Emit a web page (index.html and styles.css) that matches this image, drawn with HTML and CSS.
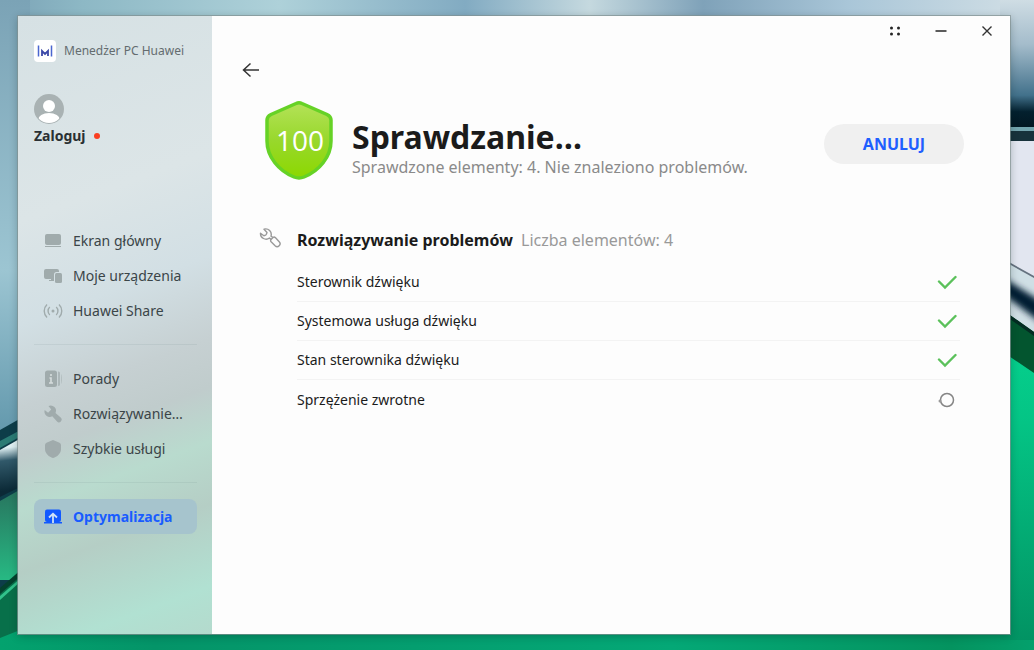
FILE: index.html
```html
<!DOCTYPE html>
<html lang="pl">
<head>
<meta charset="utf-8">
<title>Menedżer PC Huawei</title>
<link rel="stylesheet" href="styles.css">
</head>
<body>
<svg class="wallpaper" viewBox="0 0 1034 650" preserveAspectRatio="none" aria-hidden="true">
  <defs>
    <linearGradient id="top" x1="0" x2="1" y1="0" y2="0"><stop offset="0" stop-color="#7ba3b6"/><stop offset=".08" stop-color="#8db8c5"/><stop offset=".27" stop-color="#aed1d9"/><stop offset=".45" stop-color="#82abc2"/><stop offset=".57" stop-color="#c5d9df"/><stop offset=".68" stop-color="#7fa2b9"/><stop offset=".82" stop-color="#a9c6d8"/><stop offset="1" stop-color="#d3e0e6"/></linearGradient>
    <linearGradient id="left" x1="0" x2="0" y1="0" y2="1"><stop offset="0" stop-color="#7ba3b6"/><stop offset=".6" stop-color="#9cc5d2"/><stop offset="1" stop-color="#5d94a9"/></linearGradient>
    <linearGradient id="rightTop" x1="0" x2="0" y1="0" y2="1"><stop offset="0" stop-color="#cfdde4"/><stop offset=".35" stop-color="#a4bccb"/><stop offset=".75" stop-color="#42718b"/><stop offset=".88" stop-color="#03202e"/><stop offset="1" stop-color="#021722"/></linearGradient>
    <linearGradient id="rightGreen" x1="0" x2="0" y1="0" y2="1"><stop offset="0" stop-color="#05cf8c"/><stop offset=".25" stop-color="#04c485"/><stop offset="1" stop-color="#029363"/></linearGradient>
    <linearGradient id="leftGreen" x1="0" x2="0" y1="0" y2="1"><stop offset="0" stop-color="#28705c"/><stop offset="1" stop-color="#27b983"/></linearGradient>
    <linearGradient id="tube" gradientUnits="userSpaceOnUse" x1="8" y1="440" x2="14" y2="490"><stop offset="0" stop-color="#eef9fa"/><stop offset=".15" stop-color="#dceef1"/><stop offset=".4" stop-color="#31596a"/><stop offset="1" stop-color="#0b2936"/></linearGradient>
    <linearGradient id="bottom" x1="0" x2="1" y1="0" y2="0"><stop offset="0" stop-color="#03a26e"/><stop offset=".15" stop-color="#049468"/><stop offset=".65" stop-color="#04a876"/><stop offset=".92" stop-color="#04935f"/><stop offset="1" stop-color="#04a06c"/></linearGradient>
    <filter id="soft" x="-50%" y="-50%" width="200%" height="200%"><feGaussianBlur stdDeviation="3"/></filter>
  </defs>
  <rect width="1034" height="650" fill="url(#top)"/>
  <rect width="30" height="450" fill="url(#left)"/>
  <path d="M0 430 30 413V650H0Z" fill="#0d3d49"/>
  <path d="M0 441 30 425V431L0 448Z" fill="#2a7b74"/>
  <path d="M0 450 30 433V482L0 497Z" fill="url(#tube)"/>
  <path d="M0 501 30 484V580H0Z" fill="url(#leftGreen)"/>
  <path d="M0 591 30 566V640H0Z" fill="#08704a"/>
  <path d="M0 588 30 562V568L0 594Z" fill="#04412d"/>
  <path d="M0 596 30 570V573L0 600Z" fill="#32c28b"/>
  <path d="M0 638 20 630H1034V650H0Z" fill="url(#bottom)"/>
  <rect x="1000" width="34" height="127" fill="url(#rightTop)"/>
  <rect x="1000" y="127" width="34" height="4" fill="#73a5ae"/>
  <rect x="1000" y="131" width="34" height="10" fill="#17323b"/>
  <rect x="1000" y="141" width="34" height="210" fill="#e2e6f0"/>
  <path d="M1000 258 1034 276V340L1000 312Z" fill="#cfdfe5"/>
  <path d="M1000 257 1034 276V278L1000 259Z" fill="#65727f"/>
  <path d="M1000 276 1044 303V325L1000 292Z" fill="#061c33" filter="url(#soft)"/>
  <path d="M1000 308 1034 332V390H1000Z" fill="#03552f"/>
  <path d="M1000 308 1034 332V336L1000 312Z" fill="#032c22"/>
  <path d="M1000 350 1034 373V640H1000Z" fill="url(#rightGreen)"/>
</svg>
<div class="window">
  <aside class="sidebar">
    <div class="brand">
      <svg class="brand-logo" viewBox="0 0 22 22" aria-hidden="true"><rect width="22" height="22" rx="4" fill="#fff"/><path d="M4.500 5.500v11M17.500 5.500v11" stroke="#4a66d0" stroke-width="1.500"/><path d="M8 16v-5l3 3 3-3v5" fill="none" stroke="#3b49a8" stroke-width="1.800"/></svg>
      <span>Menedżer PC Huawei</span>
    </div>
    <button class="account" type="button">
      <svg class="avatar" viewBox="0 0 30 30" aria-hidden="true"><defs><clipPath id="face"><circle cx="15" cy="15" r="14"/></clipPath></defs><circle cx="15" cy="15" r="15" fill="#a9b2b3"/><g clip-path="url(#face)" fill="#fff"><circle cx="15" cy="12" r="6"/><ellipse cx="15" cy="26" rx="11" ry="7"/></g></svg>
      <span class="account-name">Zaloguj<i class="dot"></i></span>
    </button>
    <nav class="menu">
      <a href="#" class="item"><svg viewBox="0 0 20 20"><rect x="2" y="3" width="16" height="11" rx="2"/><path d="M2 15h16v1H2z"/></svg>Ekran główny</a>
      <a href="#" class="item"><svg viewBox="0 0 20 20"><path d="M3 3h11a2 2 0 0 1 2 2v1h-2.500A2.500 2.500 0 0 0 11 8.500V15H6v-1h2v-1H3a2 2 0 0 1-2-2V5a2 2 0 0 1 2-2z"/><rect x="12" y="7" width="7" height="10" rx="1.500"/></svg>Moje urządzenia</a>
      <a href="#" class="item"><svg viewBox="0 0 20 20"><circle cx="10" cy="10" r="1.500"/><path d="M6.800 6a5.500 5.500 0 0 0 0 8M13.200 6a5.500 5.500 0 0 1 0 8M4 3.500a9 9 0 0 0 0 13M16 3.500a9 9 0 0 1 0 13" class="line"/></svg>Huawei Share</a>
      <hr>
      <a href="#" class="item"><svg viewBox="0 0 20 20"><rect x="2" y="1.500" width="12" height="16.500" rx="2.500"/><path d="M15 2.500c2 0 2 1 2 2v10.500c0 1 0 2-2 2z" opacity=".7"/><path d="M18 5c1.300 1 1.300 9 0 10z" opacity=".5"/><path d="M8 5v2M6.500 9H8v5M6 14h4" fill="none" stroke="#d5dddd" stroke-width="1.600"/></svg>Porady</a>
      <a href="#" class="item"><svg viewBox="0 0 20 20"><path d="M5.500 2A5.300 5.300 0 0 1 12.500 9l5.200 4.600a2.600 2.600 0 0 1-3.700 4L9.300 12.200A5.300 5.300 0 0 1 1.700 6l3.400 2.800L8.200 5.500z"/></svg>Rozwiązywanie…</a>
      <a href="#" class="item"><svg viewBox="0 0 20 20"><path d="M10 1 16.500 3.800Q18 4.500 18 6v4c0 4.500-4 8-8 9-4-1-8-4.500-8-9V6Q2 4.500 3.500 3.800z"/></svg>Szybkie usługi</a>
      <hr>
      <a href="#" class="item active" aria-current="page"><svg viewBox="0 0 20 20"><rect x="2" y="2.500" width="16" height="12.500" rx="2"/><path d="M1 15h18v1.500H1z"/><path d="M10 16V7M6 10.500 10 6.800l4 3.700" fill="none" stroke="#cfe1f5" stroke-width="1.800"/></svg>Optymalizacja</a>
    </nav>
  </aside>
  <main class="content">
    <div class="titlebar">
      <button type="button" aria-label="Menu"><svg viewBox="0 0 16 16"><g fill="#252525"><circle cx="4.500" cy="5" r="1.500"/><circle cx="11.500" cy="5" r="1.500"/><circle cx="4.500" cy="11" r="1.500"/><circle cx="11.500" cy="11" r="1.500"/></g></svg></button>
      <button type="button" aria-label="Minimalizuj"><svg viewBox="0 0 16 16"><path d="M2.500 8h11" stroke="#252525" stroke-width="1.500"/></svg></button>
      <button type="button" aria-label="Zamknij"><svg viewBox="0 0 16 16"><path d="m3.500 3.500 9 9m0-9-9 9" stroke="#333" stroke-width="1.400"/></svg></button>
    </div>
    <button class="back" type="button" aria-label="Wstecz"><svg viewBox="0 0 18 16"><path d="M17 8H1.500M8.500 1.500 1.500 8l7 6.500" fill="none" stroke="#333" stroke-width="1.500"/></svg></button>
    <header class="status">
      <svg class="shield" viewBox="0 0 68 80" role="img" aria-label="100"><defs><linearGradient id="sh" x1="0" y1="0" x2="0" y2="1"><stop offset="0" stop-color="#b4e258"/><stop offset=".5" stop-color="#98d82c"/><stop offset="1" stop-color="#8cd800"/></linearGradient></defs><path d="M31 3.500Q34 2 37 3.500L62 14.500Q66 16.500 66 20V41C66 57 54 71 39 77Q34 79 29 77C14 71 2 57 2 41V20Q2 16.500 6 14.500Z" fill="url(#sh)" stroke="#66d226" stroke-width="3.500"/><text x="35" y="51" text-anchor="middle" class="score">100</text></svg>
      <div class="status-text">
        <h1>Sprawdzanie…</h1>
        <p>Sprawdzone elementy: 4. Nie znaleziono problemów.</p>
      </div>
      <button class="cancel" type="button">ANULUJ</button>
    </header>
    <section class="checks">
      <svg class="tool" viewBox="0 0 24 24" aria-hidden="true"><path d="M6 3.200A5.600 5.600 0 0 1 13 10.200l2 1.300c.8-.6 1.600-.5 2.300.1l3.900 4.100a2.900 2.900 0 0 1-4.100 4.100l-4-4c-.6-.7-.6-1.500-.1-2.200L11.500 12A5.600 5.600 0 0 1 2.500 7.200l3.400 2.600Q8.500 9.500 9 6.500z" fill="none" stroke="#999" stroke-width="1.400" stroke-linejoin="round"/><path d="m13 13.600 2-2.100" stroke="#999" stroke-width="1.400"/></svg>
      <h2>Rozwiązywanie problemów <span>Liczba elementów: 4</span></h2>
      <ul>
        <li>Sterownik dźwięku<svg viewBox="0 0 20 20"><path d="m2 9.500 6 6L18.500 5" class="tick"/></svg></li>
        <li>Systemowa usługa dźwięku<svg viewBox="0 0 20 20"><path d="m2 9.500 6 6L18.500 5" class="tick"/></svg></li>
        <li>Stan sterownika dźwięku<svg viewBox="0 0 20 20"><path d="m2 9.500 6 6L18.500 5" class="tick"/></svg></li>
        <li>Sprzężenie zwrotne<svg viewBox="0 0 20 20"><circle cx="10" cy="10" r="6.500" fill="none" stroke="#858585" stroke-width="1.500"/><circle cx="3" cy="11" r="1.500" fill="#999"/></svg></li>
      </ul>
    </section>
  </main>
</div>
</body>
</html>
```
FILE: styles.css
```css
* { box-sizing: border-box; }
body {
  margin: 0;
  min-height: 100vh;
  display: flex;
  padding: 16px 24px 16px 18px;
  font-family: "Noto Sans", "Open Sans", sans-serif;
  font-size: 14px;
  line-height: 20px;
  color: #1b1b1b;
}
button { border: 0; padding: 0; background: none; font: inherit; color: inherit; }
svg { display: block; flex: none; }
h1, h2, p, ul { margin: 0; padding: 0; }
.wallpaper { position: fixed; inset: 0; width: 100%; height: 100%; z-index: -1; }
.window {
  flex: 1;
  display: flex;
  box-shadow: 0 0 0 1px rgba(130, 145, 145, .7), 0 2px 8px rgba(0, 30, 30, .3);
}
.sidebar {
  width: 194px;
  flex: none;
  padding: 24px 15px 24px 16px;
  background: linear-gradient(160deg, #d6e1e4 0%, #dce5e7 30%, #d2dfe4 45%, #c6d0d2 57%, #c0cccc 64%, #b9dbce 72%, #b5cec5 81%, #b1e1d2 93%, #b4dacd 100%);
}
.brand { display: flex; align-items: center; gap: 8px; font-size: 12px; line-height: 22px; color: #646c6f; }
.brand-logo { width: 22px; height: 22px; }
.account { display: block; margin-top: 32px; text-align: left; }
.avatar { width: 30px; height: 30px; }
.account-name { display: flex; align-items: center; gap: 8px; margin-top: 2px; font-weight: 700; font-size: 14px; color: #2a3033; }
.dot { width: 6px; height: 6px; border-radius: 50%; background: #fa3f22; }
.menu { margin-top: 77px; }
.item {
  display: flex;
  align-items: center;
  gap: 10px;
  height: 35px;
  padding-left: 9px;
  border-radius: 8px;
  color: #3b4548;
  text-decoration: none;
  white-space: nowrap;
}
.item svg { width: 20px; height: 20px; fill: #a0abac; }
.item .line { fill: none; stroke: #a0abac; stroke-width: 1.4; }
.item.active { background: #a6c4cd; color: #195cff; font-weight: 700; }
.item.active svg { fill: #1259ff; }
.menu hr { height: 1px; margin: 16px 0; border: 0; background: rgba(90, 120, 120, .1); }
.content { flex: 1; min-width: 0; background: #fdfdfd; }
.titlebar { display: flex; justify-content: flex-end; gap: 30px; height: 30px; padding-right: 15px; }
.titlebar svg { width: 16px; height: 16px; }
.back { display: block; margin: 16px 0 0 30px; }
.back svg { width: 18px; height: 16px; }
.status { display: flex; align-items: center; margin: 22px 46px 0 53px; }
.shield { width: 68px; height: 80px; }
.score { font-family: "Open Sans", sans-serif; font-size: 28px; fill: #fff; }
.status-text { flex: 1; margin-left: 19px; padding-top: 14px; }
h1 { font-size: 32px; line-height: 40px; }
.status-text p { font-size: 16px; line-height: 20px; color: #8a8a8a; }
.cancel { width: 140px; height: 40px; margin-top: 8px; border-radius: 20px; background: #f0f0f0; color: #1f5fff; font-size: 16px; font-weight: 700; }
.checks { display: grid; grid-template-columns: 24px 1fr; column-gap: 15px; margin: 46px 50px 0 46px; }
.tool { width: 24px; height: 24px; }
h2 { font-size: 16px; line-height: 28px; }
h2 span { margin-left: 4px; font-weight: 400; color: #999; }
.checks ul { grid-column: 2; margin-top: 9px; list-style: none; }
.checks li { display: flex; align-items: center; justify-content: space-between; height: 39px; border-bottom: 1px solid #f3f3f3; padding-right: 3px; }
.checks li:last-child { border-bottom: 0; }
.checks li svg { width: 20px; height: 20px; }
.tick { fill: none; stroke: #5bc15b; stroke-width: 2.4; stroke-linecap: round; }
```
